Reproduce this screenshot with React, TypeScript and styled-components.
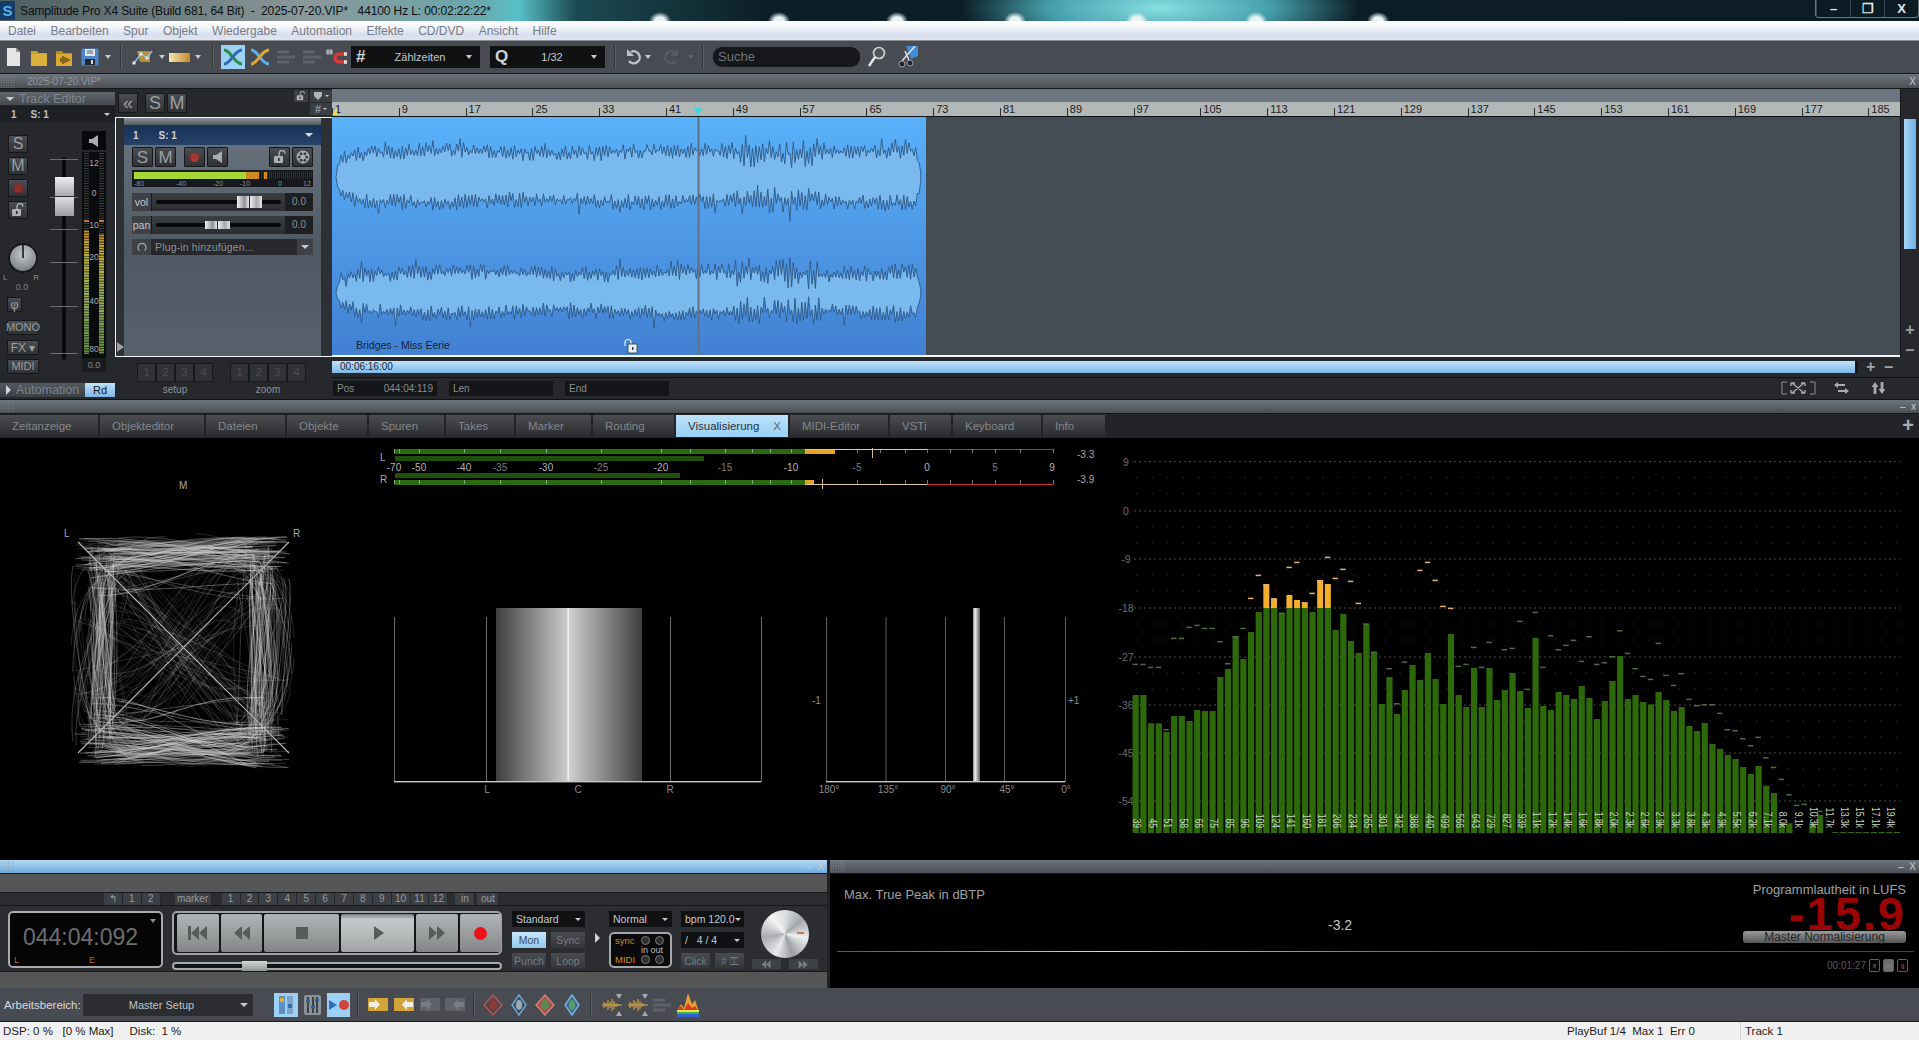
import React from "react";
import styled, { createGlobalStyle } from "styled-components";

const FONT = `"Liberation Sans", Arial, sans-serif`;

const GlobalStyle = createGlobalStyle`
  html, body {
    margin: 0;
    padding: 0;
    background: #000;
    overflow: hidden;
  }
  body, button {
    font-family: ${FONT};
  }
`;

// small seeded random, so the waves look the same on every run
function makeRng(seed: number) {
  let a = seed;
  return () => {
    a = (a + 0x6d2b79f5) | 0;
    let t = Math.imul(a ^ (a >>> 15), 1 | a);
    t = (t + Math.imul(t ^ (t >>> 7), 61 | t)) ^ t;
    return ((t ^ (t >>> 14)) >>> 0) / 4294967296;
  };
}

/* ---------- window chrome ---------- */

const blotches = [660, 779, 897, 1015, 1137, 1256, 1378]
  .map((x) => `radial-gradient(ellipse 11px 9px at ${x}px 21px, #e8f4f4 0, #e8f4f4 45%, transparent 100%)`)
  .join(",");

const Page = styled.div`
  width: 1919px;
  height: 1040px;
  display: flex;
  flex-direction: column;
  overflow: hidden;
  background: #2a2c2f;
`;

const TitleBar = styled.div`
  height: 21px;
  flex: none;
  display: flex;
  align-items: center;
  background: ${blotches}, radial-gradient(ellipse 200px 50px at 1160px 8px, #86dfe2 0, #469fac 55%, transparent 100%),
    linear-gradient(90deg, #4d5c60 0, #8a989a 16%, #6aa8ae 25%, #58c0c8 27%, #1c4a52 30%, #0c1e26 40%, #0b1c24 100%);
`;

const AppLogo = styled.div`
  width: 15px;
  height: 19px;
  background: #143c66;
  color: #58b2ee;
  font-size: 15px;
  font-weight: bold;
  text-align: center;
  line-height: 19px;
`;

const TitleText = styled.span`
  margin-left: 5px;
  font-size: 12px;
  letter-spacing: -0.12px;
  color: #0c1012;
  white-space: pre;
`;

const WindowButtons = styled.div`
  margin-left: auto;
  width: 104px;
  height: 18px;
  align-self: flex-start;
  display: flex;
  border: 1px solid #6a7880;
  border-top: none;
  border-radius: 0 0 4px 4px;
  box-sizing: border-box;
`;

const WindowButton = styled.div`
  flex: 1;
  display: flex;
  align-items: center;
  justify-content: center;
  border-left: 1px solid #39454c;
  color: #e8e8e8;
  font-size: 13px;
  font-weight: bold;
`;

const MenuBar = styled.div`
  height: 20px;
  flex: none;
  display: flex;
  align-items: center;
  padding-left: 8px;
  gap: 14.5px;
  border-bottom: 1px solid #8b8f94;
  box-sizing: border-box;
  background: linear-gradient(180deg, #ffffff 0, #f2f4fa 35%, #d9dfee 70%, #e0e4ef 100%);
`;

const MenuItem = styled.span`
  font-size: 12px;
  color: #777c86;
`;

const ToolBar = styled.div<{ $h?: number }>`
  height: ${(p) => p.$h ?? 33}px;
  flex: none;
  display: flex;
  align-items: center;
  background: #484c52;
  border-bottom: 1px solid #17181a;
  box-sizing: border-box;
`;

const ToolSlot = styled.div<{ $ml?: number; $w: number; $active?: boolean }>`
  margin-left: ${(p) => p.$ml ?? 0}px;
  width: ${(p) => p.$w}px;
  height: 24px;
  flex: none;
  display: flex;
  align-items: center;
  justify-content: center;
  background: ${(p) => (p.$active ? "#9cd0f4" : "transparent")};
`;

const Caret = styled.i<{ $ml?: number; $c?: string; $s?: number; $auto?: boolean }>`
  display: block;
  flex: none;
  margin-left: ${(p) => (p.$auto ? "auto" : `${p.$ml ?? 0}px`)};
  width: 0;
  height: 0;
  border-left: ${(p) => p.$s ?? 3.5}px solid transparent;
  border-right: ${(p) => p.$s ?? 3.5}px solid transparent;
  border-top: ${(p) => p.$s ?? 4}px solid ${(p) => p.$c ?? "#c8cacc"};
`;

const ToolSep = styled.i<{ $ml: number }>`
  display: block;
  flex: none;
  margin-left: ${(p) => p.$ml}px;
  width: 1px;
  height: 24px;
  background: #33363a;
  border-right: 1px solid #5b5f65;
`;

const SnapSelect = styled.div<{ $ml: number; $w: number }>`
  margin-left: ${(p) => p.$ml}px;
  width: ${(p) => p.$w}px;
  height: 22px;
  flex: none;
  display: flex;
  align-items: center;
  padding: 0 8px 0 5px;
  box-sizing: border-box;
  background: #101113;
  color: #c6c8ca;
  font-size: 11px;
`;

const SnapGlyph = styled.span`
  font-size: 17px;
  font-weight: bold;
  color: #cfd1d3;
  width: 18px;
`;

const SnapLabel = styled.span`
  flex: 1;
  text-align: center;
`;

const SearchBox = styled.div`
  margin-left: 9px;
  width: 147px;
  height: 20px;
  flex: none;
  border-radius: 9px;
  background: #15171a;
  color: #6f7478;
  font-size: 13px;
  line-height: 20px;
  padding-left: 5px;
  box-sizing: border-box;
`;

const Grip = styled.i`
  display: block;
  flex: none;
  width: 15px;
  height: 100%;
  background: radial-gradient(#8a8f94 0.7px, transparent 0.8px) 0 0 / 2.5px 2.5px;
`;

const PaneHeader = styled.div<{ $h: number; $light?: boolean }>`
  height: ${(p) => p.$h}px;
  flex: none;
  display: flex;
  align-items: center;
  background: ${(p) =>
    p.$light ? "linear-gradient(180deg, #b5dcf8 0, #6fa9da 100%)" : "linear-gradient(180deg, #6f757c 0, #4b5056 100%)"};
  border-bottom: 1px solid #141517;
  box-sizing: border-box;
  color: #c8cacd;
`;

const PaneTitle = styled.span`
  margin-left: 12px;
  font-size: 10px;
  color: #8f959b;
`;

const PaneControls = styled.span`
  margin-left: auto;
  padding-right: 3px;
  font-size: 10px;
  white-space: pre;
`;

/* ---------- editor: left strip ---------- */

const EditorArea = styled.div`
  height: 311px;
  flex: none;
  display: flex;
  background: #26282b;
  border-bottom: 1px solid #101113;
  box-sizing: border-box;
`;

const LeftStrip = styled.div`
  width: 115px;
  flex: none;
  display: flex;
  flex-direction: column;
  padding-top: 3px;
  box-sizing: border-box;
`;

const StripHead = styled.div`
  height: 13px;
  display: flex;
  align-items: center;
  gap: 5px;
  padding-left: 6px;
  background: linear-gradient(180deg, #62676d 0, #45494e 100%);
  color: #7d8791;
  font-size: 12.5px;
`;

const StripName = styled.div`
  height: 16px;
  margin-top: 1px;
  display: flex;
  align-items: center;
  padding: 0 5px 0 11px;
  gap: 14px;
  background: #1e2023;
  color: #bfc2c5;
  font-size: 10px;
  font-weight: bold;
`;

const StripBody = styled.div`
  height: 258px;
  display: flex;
`;

const ButtonCol = styled.div`
  width: 40px;
  flex: none;
  display: flex;
  flex-direction: column;
  align-items: flex-start;
  padding: 13px 0 0 8px;
  box-sizing: border-box;
`;

const KeyButton = styled.button<{ $w?: number; $h?: number; $fs?: number; $mt?: number; $ml?: number }>`
  width: ${(p) => p.$w ?? 20}px;
  height: ${(p) => p.$h ?? 18}px;
  margin: ${(p) => p.$mt ?? 0}px 0 0 ${(p) => p.$ml ?? 0}px;
  flex: none;
  padding: 0;
  display: flex;
  align-items: center;
  justify-content: center;
  border: 1px solid #16171a;
  border-radius: 1px;
  background: linear-gradient(180deg, #4a4d52 0, #2f3135 100%);
  color: #9a9ea2;
  font-size: ${(p) => p.$fs ?? 15}px;
  line-height: 1;
`;

const Knob = styled.div`
  width: 26px;
  height: 26px;
  margin: 24px 0 0 0;
  border-radius: 50%;
  border: 2px solid #17181a;
  background: radial-gradient(circle at 50% 35%, #c4c8cc 0, #8f949a 60%, #5d6166 100%);
  display: flex;
  justify-content: center;
`;

const KnobMark = styled.i`
  display: block;
  width: 2px;
  height: 13px;
  background: #33363a;
`;

const KnobLabels = styled.div`
  width: 36px;
  height: 9px;
  margin-left: -5px;
  display: flex;
  justify-content: space-between;
  color: #8d9195;
  font-size: 8px;
  line-height: 9px;
`;

const KnobValue = styled.div`
  width: 28px;
  height: 10px;
  text-align: center;
  color: #7a7e82;
  font-size: 9px;
  line-height: 10px;
`;

const FaderCol = styled.div`
  width: 42px;
  height: 258px;
  flex: none;
  position: relative;
`;

const FaderTrack = styled.i`
  position: absolute;
  left: 22px;
  top: 35px;
  width: 4px;
  height: 203px;
  background: #08090a;
  border-radius: 2px;
`;

const FaderTick = styled.i<{ $top: number }>`
  position: absolute;
  left: 10px;
  top: ${(p) => p.$top}px;
  width: 28px;
  height: 1px;
  background: #6c7075;
`;

const FaderCap = styled.div`
  position: absolute;
  left: 15px;
  top: 55px;
  width: 19px;
  height: 39px;
  background: linear-gradient(180deg, #eceeef 0, #a8acb0 48%, #2a2c2f 49%, #2a2c2f 51%, #dcdee0 52%, #9a9ea3 100%);
`;

const MeterCol = styled.div`
  width: 25px;
  flex: none;
  display: flex;
  flex-direction: column;
  padding-top: 9px;
  box-sizing: border-box;
`;

const SpeakerBox = styled.div`
  width: 24px;
  height: 19px;
  margin-bottom: 2px;
  display: flex;
  align-items: center;
  justify-content: center;
  background: #08090a;
`;

const MeterValue = styled.div`
  width: 24px;
  height: 14px;
  background: #1a1b1d;
  color: #8a8e92;
  font-size: 9px;
  text-align: center;
  line-height: 14px;
`;

const AutomationRow = styled.div`
  height: 14px;
  margin-top: 3px;
  display: flex;
`;

const AutomationLabel = styled.div`
  flex: 1;
  display: flex;
  align-items: center;
  gap: 5px;
  padding-left: 6px;
  background: linear-gradient(180deg, #55595f 0, #3b3e43 100%);
  color: #78838e;
  font-size: 12.5px;
`;

const AutomationMode = styled.div`
  width: 30px;
  background: linear-gradient(180deg, #bfe2fa 0, #7fb7e2 100%);
  color: #14181c;
  font-size: 11px;
  text-align: center;
  line-height: 14px;
`;

/* ---------- editor: track column ---------- */

const TrackColumn = styled.div`
  width: 217px;
  flex: none;
  display: flex;
  flex-direction: column;
`;

const TrackTop = styled.div`
  height: 28px;
  flex: none;
  display: flex;
  padding: 4px 0 0 3px;
  box-sizing: border-box;
`;

const TopRightTools = styled.div`
  margin-left: auto;
  display: flex;
  flex-direction: column;
  align-items: flex-end;
  margin-top: -3px;
  gap: 1px;
`;

const TinyRow = styled.div`
  display: flex;
  align-items: center;
  gap: 2px;
  height: 12px;
`;

const TinyTool = styled.div<{ $w: number }>`
  width: ${(p) => p.$w}px;
  height: 12px;
  display: flex;
  align-items: center;
  justify-content: center;
  gap: 2px;
  background: #3b3e42;
  color: #b2b5b8;
  font-size: 11px;
  line-height: 1;
`;

const TrackFrame = styled.div`
  height: 240px;
  flex: none;
  display: flex;
  border: 1px solid #f2f4f6;
  border-right: none;
  box-sizing: border-box;
`;

const FrameGutter = styled.div<{ $w: number }>`
  width: ${(p) => p.$w}px;
  flex: none;
  display: flex;
  align-items: flex-end;
  justify-content: center;
  padding-bottom: 4px;
  box-sizing: border-box;
  background: #2d3034;
`;

const GutterArrow = styled.i`
  display: block;
  width: 0;
  height: 0;
  border-top: 5px solid transparent;
  border-bottom: 5px solid transparent;
  border-left: 7px solid #9aa0a6;
`;

const TrackCard = styled.div`
  width: 197px;
  flex: none;
  display: flex;
  flex-direction: column;
  background: linear-gradient(180deg, #6b7681 0, #4e5963 55%, #56616c 100%);
`;

const CardTop = styled.div`
  height: 7px;
  background: linear-gradient(180deg, #8b9198 0, #565b61 100%);
`;

const CardHead = styled.div`
  height: 20px;
  display: flex;
  align-items: center;
  padding: 0 8px 0 9px;
  gap: 20px;
  background: linear-gradient(180deg, #173257 0, #27426a 100%);
  color: #cfd3d7;
  font-size: 10px;
  font-weight: bold;
  white-space: nowrap;
`;

const CardButtons = styled.div`
  display: flex;
  height: 20px;
  margin: 2px 0 0 8px;
`;

const CardMeter = styled.svg`
  display: block;
  width: 181px;
  height: 17px;
  margin: 3px 0 0 8px;
`;

const ParamRow = styled.div<{ $mt: number }>`
  height: 18px;
  margin: ${(p) => p.$mt}px 8px 0;
  display: flex;
  align-items: stretch;
  background: #26282b;
`;

const ParamLabel = styled.div`
  width: 19px;
  flex: none;
  background: #3e4145;
  color: #c2c5c8;
  font-size: 10.5px;
  text-align: center;
  line-height: 18px;
  border-right: 1px solid #17181a;
`;

const ParamSlider = styled.div`
  flex: 1;
  position: relative;
  background: linear-gradient(180deg, #3b3e42 0, #2c2e31 100%);
`;

const ParamTrack = styled.i`
  position: absolute;
  left: 4px;
  right: 4px;
  top: 7px;
  height: 4px;
  border-radius: 2px;
  background: #08090a;
`;

const ParamThumb = styled.i<{ $left: number; $h: number }>`
  position: absolute;
  left: ${(p) => p.$left}px;
  top: ${(p) => (18 - p.$h) / 2}px;
  width: 25px;
  height: ${(p) => p.$h}px;
  background: linear-gradient(90deg, #f2f3f4 0, #8f9398 30%, #e8e9ea 48%, #22242a 50%, #e8e9ea 54%, #a4a8ac 80%, #e6e7e8 100%);
`;

const ParamValue = styled.div`
  width: 28px;
  flex: none;
  background: #1d1f22;
  color: #8b8f93;
  font-size: 10px;
  text-align: center;
  line-height: 18px;
`;

const PluginRow = styled.div`
  height: 16px;
  margin: 5px 8px 0;
  display: flex;
  align-items: center;
  background: #26282b;
  color: #8d9195;
  font-size: 10.5px;
  letter-spacing: 0.15px;
`;

const PluginIcon = styled.div`
  width: 19px;
  height: 16px;
  display: flex;
  align-items: center;
  justify-content: center;
  background: #3e4145;
  margin-right: 4px;
`;

const PluginDrop = styled.div`
  margin-left: auto;
  width: 16px;
  height: 16px;
  display: flex;
  align-items: center;
  justify-content: center;
  background: #3e4145;
`;

const TrackFoot = styled.div`
  flex: 1;
  display: flex;
  gap: 17px;
  padding: 6px 0 0 22px;
  box-sizing: border-box;
`;

const PresetGroup = styled.div`
  display: flex;
  flex-direction: column;
  align-items: center;
  gap: 2px;
`;

const PresetKeys = styled.div`
  display: flex;
`;

const PresetKey = styled.div`
  width: 19px;
  height: 19px;
  box-sizing: border-box;
  border: 1px solid #17181a;
  background: #303235;
  color: #4b4e52;
  font-size: 11px;
  text-align: center;
  line-height: 17px;
`;

const PresetLabel = styled.span`
  color: #8f9397;
  font-size: 10px;
`;

/* ---------- editor: arrange ---------- */

const Arrange = styled.div`
  flex: 1;
  display: flex;
  flex-direction: column;
  min-width: 0;
`;

const ArrangeTop = styled.div`
  height: 268px;
  flex: none;
  display: flex;
`;

const ArrangeMain = styled.div`
  flex: 1;
  display: flex;
  flex-direction: column;
  min-width: 0;
`;

const RulerTop = styled.div`
  height: 13px;
  flex: none;
  background: #6c7480;
`;

const Ruler = styled.div`
  height: 15px;
  flex: none;
  display: flex;
  position: relative;
  overflow: hidden;
  background: #b2b7b8;
  border-bottom: 1px solid #101113;
  box-sizing: border-box;
`;

const RulerCell = styled.div`
  width: 66.8px;
  flex: none;
  box-sizing: border-box;
  padding-left: 3px;
  color: #1a1c1e;
  font-size: 11px;
  line-height: 14px;
  background: linear-gradient(#2a2c2f, #2a2c2f) 0 6px / 1px 8px no-repeat;
`;

const PlayMark = styled.i`
  position: absolute;
  left: 362px;
  top: 6px;
  width: 0;
  height: 0;
  border-left: 4px solid transparent;
  border-right: 4px solid transparent;
  border-top: 8px solid #3adbe0;
`;

const LoopMark = styled.i`
  position: absolute;
  left: 0;
  top: 6px;
  width: 0;
  height: 0;
  border-right: 5px solid #e8dc6a;
  border-top: 7px solid transparent;
`;

const Lane = styled.div`
  height: 238px;
  flex: none;
  display: flex;
  background: #444c56;
`;

const Clip = styled.svg`
  display: block;
  width: 594px;
  height: 238px;
  flex: none;
`;

const WhiteLine = styled.div`
  height: 2px;
  flex: none;
  background: #f4f6f8;
`;

const VScroll = styled.div`
  width: 19px;
  flex: none;
  display: flex;
  flex-direction: column;
  align-items: center;
  background: #26282b;
  padding-top: 30px;
  box-sizing: border-box;
  border-left: 1px solid #15161a;
`;

const VThumb = styled.div`
  width: 12px;
  height: 131px;
  background: linear-gradient(90deg, #a8d6f6 0, #6fb0e4 100%);
`;

const VStep = styled.div<{ $mt: number }>`
  margin-top: ${(p) => p.$mt}px;
  color: #9a9ea2;
  font-size: 16px;
  font-weight: bold;
  line-height: 14px;
`;

const ScrollRow = styled.div`
  height: 21px;
  flex: none;
  display: flex;
  align-items: center;
  border-bottom: 1px solid #101113;
  box-sizing: border-box;
`;

const HScroll = styled.div`
  width: 1526px;
  height: 12px;
  flex: none;
  padding-left: 8px;
  box-sizing: border-box;
  background: linear-gradient(180deg, #c0e2fa 0, #7fb9e8 100%);
  color: #1a2430;
  font-size: 10px;
  line-height: 12px;
  border-right: 3px solid #14161a;
`;

const ScrollStep = styled.div<{ $ml: number }>`
  margin-left: ${(p) => p.$ml}px;
  color: #a0a4a8;
  font-size: 16px;
  font-weight: bold;
`;

const InfoRow = styled.div`
  height: 20px;
  flex: none;
  display: flex;
  align-items: center;
  padding-left: 1px;
`;

const InfoBox = styled.div<{ $ml?: number }>`
  width: 104px;
  height: 15px;
  margin-left: ${(p) => p.$ml ?? 0}px;
  flex: none;
  display: flex;
  justify-content: space-between;
  padding: 0 4px;
  box-sizing: border-box;
  background: #141518;
  color: #898d91;
  font-size: 10px;
  line-height: 15px;
`;

const InfoTool = styled.div<{ $ml: number }>`
  margin-left: ${(p) => p.$ml}px;
  flex: none;
  display: flex;
`;

/* ---------- tabs ---------- */

const TabBar = styled.div`
  height: 24px;
  flex: none;
  display: flex;
  align-items: flex-end;
  gap: 2px;
  padding-bottom: 1px;
  box-sizing: border-box;
  background: #222427;
`;

const Tab = styled.div<{ $w: number; $active?: boolean }>`
  width: ${(p) => p.$w}px;
  height: 22px;
  flex: none;
  display: flex;
  align-items: center;
  padding-left: 12px;
  box-sizing: border-box;
  font-size: 11.5px;
  color: ${(p) => (p.$active ? "#26323c" : "#83878b")};
  background: ${(p) =>
    p.$active ? "linear-gradient(180deg, #bde2fb 0, #98cff5 100%)" : "linear-gradient(180deg, #4b4d51 0, #2b2c2f 100%)"};
`;

const TabClose = styled.span`
  margin-left: auto;
  padding-right: 7px;
  color: #5c6770;
`;

const TabAdd = styled.div`
  margin-left: auto;
  width: 22px;
  height: 22px;
  color: #a8acb0;
  font-size: 20px;
  font-weight: bold;
  text-align: center;
  line-height: 20px;
`;

/* ---------- visualisation ---------- */

const VizPanel = styled.div`
  height: 422px;
  flex: none;
  display: flex;
  background: #000;
`;

const VizChart = styled.svg<{ $w: number }>`
  display: block;
  width: ${(p) => p.$w}px;
  height: 422px;
  flex: none;
`;

const ChartText = styled.text<{ $fs?: number; $c?: string }>`
  font-family: ${FONT};
  font-size: ${(p) => p.$fs ?? 10}px;
  fill: ${(p) => p.$c ?? "#a8a8a8"};
`;

/* ---------- bottom docks ---------- */

const Docks = styled.div`
  height: 128px;
  flex: none;
  display: flex;
  gap: 3px;
  background: #202225;
`;

const TransportDock = styled.div`
  width: 827px;
  flex: none;
  display: flex;
  flex-direction: column;
`;

const DockBody = styled.div`
  flex: 1;
  background: #565656;
  padding-top: 18px;
  box-sizing: border-box;
`;

const Transport = styled.div`
  height: 80px;
  display: flex;
  flex-direction: column;
  background: #2b2d30;
  border-top: 1px solid #17181a;
  border-bottom: 1px solid #17181a;
  box-sizing: border-box;
`;

const MarkerRow = styled.div`
  height: 13px;
  flex: none;
  display: flex;
  padding-left: 104px;
  border-bottom: 1px solid #17181a;
  box-sizing: border-box;
`;

const MarkerKey = styled.div<{ $w?: number; $ml?: number }>`
  width: ${(p) => p.$w ?? 18.9}px;
  margin-left: ${(p) => p.$ml ?? 0}px;
  flex: none;
  background: #3c3f43;
  border-right: 1px solid #26282b;
  box-sizing: border-box;
  color: #979b9f;
  font-size: 10px;
  text-align: center;
  line-height: 12px;
`;

const TransportBody = styled.div`
  flex: 1;
  display: flex;
  padding: 5px 0 0 8px;
  box-sizing: border-box;
`;

const TimeDisplay = styled.div`
  width: 155px;
  height: 57px;
  flex: none;
  position: relative;
  display: flex;
  flex-direction: column;
  padding: 11px 0 0 13px;
  box-sizing: border-box;
  border: 2px solid #a7abae;
  border-radius: 5px;
  background: #050505;
  color: #6b6d6f;
  font-size: 23px;
  line-height: 26px;
`;

const TimeMarks = styled.div`
  display: flex;
  gap: 70px;
  margin: 5px 0 0 -9px;
  color: #b46a2c;
  font-size: 9px;
  line-height: 10px;
`;

const TimeCaret = styled.i`
  position: absolute;
  right: 5px;
  top: 6px;
  width: 0;
  height: 0;
  border-left: 3px solid transparent;
  border-right: 3px solid transparent;
  border-top: 4px solid #8a8e92;
`;

const TransportCol = styled.div`
  width: 330px;
  margin-left: 9px;
  flex: none;
  display: flex;
  flex-direction: column;
`;

const TransportKeys = styled.div`
  height: 44px;
  flex: none;
  display: flex;
  gap: 2px;
  padding: 1px 3px;
  box-sizing: border-box;
  border: 2px solid #9ea2a5;
  border-radius: 5px;
  background: #141517;
`;

const TransportKey = styled.div<{ $w: number; $lit?: boolean }>`
  width: ${(p) => p.$w}px;
  flex: none;
  display: flex;
  align-items: center;
  justify-content: center;
  border-radius: 2px;
  background: ${(p) =>
    p.$lit
      ? "linear-gradient(180deg, #7c8080 0, #c4c8c8 14%, #b6baba 55%, #a0a4a4 100%)"
      : "linear-gradient(180deg, #b0b4b4 0, #989c9c 55%, #828686 100%)"};
`;

const TransportSlider = styled.div`
  height: 8px;
  margin-top: 7px;
  position: relative;
  border: 2px solid #a4a8ab;
  border-radius: 4px;
  background: #121315;
  box-sizing: border-box;
`;

const SliderThumb = styled.i`
  position: absolute;
  left: 68px;
  top: -3px;
  width: 25px;
  height: 10px;
  background: linear-gradient(180deg, #d6d8d8 0, #8f9393 100%);
`;

const ModeCol = styled.div<{ $w: number; $ml: number }>`
  width: ${(p) => p.$w}px;
  margin-left: ${(p) => p.$ml}px;
  flex: none;
  display: flex;
  flex-direction: column;
`;

const ModeSelect = styled.div<{ $mt?: number }>`
  height: 16px;
  margin-top: ${(p) => p.$mt ?? 0}px;
  flex: none;
  display: flex;
  align-items: center;
  justify-content: space-between;
  padding: 0 4px;
  box-sizing: border-box;
  background: #101113;
  color: #c6c8ca;
  font-size: 10.5px;
  white-space: nowrap;
`;

const ModeGrid = styled.div`
  display: grid;
  grid-template-columns: 29px 29px;
  grid-auto-rows: 16px;
  justify-content: space-between;
  row-gap: 5px;
  margin-top: 5px;
`;

const WideModeGrid = styled(ModeGrid)`
  grid-template-columns: 34px 34px;
`;

const ModeKey = styled.div<{ $lit?: boolean }>`
  background: ${(p) => (p.$lit ? "linear-gradient(180deg, #c6e6fb 0, #93c9ef 100%)" : "linear-gradient(180deg, #484b4f 0, #33353a 100%)")};
  color: ${(p) => (p.$lit ? "#3b4a55" : "#777b7f")};
  font-size: 10.5px;
  text-align: center;
  line-height: 16px;
`;

const ModeArrowCol = styled.div`
  width: 24px;
  flex: none;
  display: flex;
  justify-content: center;
  padding-top: 22px;
  box-sizing: border-box;
`;

const ArrowRight = styled.i`
  display: block;
  width: 0;
  height: 0;
  border-top: 5px solid transparent;
  border-bottom: 5px solid transparent;
  border-left: 5px solid #d0d4d8;
`;

const SyncBox = styled.div`
  height: 36px;
  margin-top: 5px;
  flex: none;
  display: grid;
  grid-template-columns: 26px 14px 14px;
  grid-template-rows: 12px 7px 12px;
  align-items: center;
  align-content: center;
  padding: 0 0 0 4px;
  box-sizing: border-box;
  border: 2px solid #a4a8ab;
  border-radius: 5px;
  background: #0a0a0b;
  color: #d08a24;
  font-size: 9.5px;
`;

const SyncLed = styled.i`
  display: block;
  width: 9px;
  height: 9px;
  box-sizing: border-box;
  border-radius: 50%;
  border: 1px solid #77797c;
  background: #2c2e30;
`;

const InOutLabel = styled.span`
  grid-column: 2 / 4;
  color: #b8babd;
  font-size: 9px;
  line-height: 7px;
  white-space: nowrap;
`;

const JogCol = styled.div`
  width: 66px;
  margin-left: 8px;
  margin-top: -1px;
  flex: none;
  display: flex;
  flex-direction: column;
  align-items: center;
`;

const JogWheel = styled.div`
  width: 48px;
  height: 48px;
  flex: none;
  position: relative;
  border-radius: 50%;
  background: conic-gradient(#dcdfe0 0deg, #a3a7aa 50deg, #eceeef 100deg, #9b9fa2 160deg, #e8eaea 205deg, #a9adb0 260deg, #f1f2f3 320deg, #dcdfe0 360deg);
`;

const JogMark = styled.i`
  position: absolute;
  left: 36px;
  top: 22px;
  width: 7px;
  height: 2px;
  background: #c47a50;
`;

const JogKeys = styled.div`
  display: flex;
  justify-content: space-between;
  width: 100%;
  margin-top: 1px;
`;

const JogKey = styled.div`
  width: 29px;
  height: 10px;
  display: flex;
  align-items: center;
  justify-content: center;
  background: #3e4145;
`;

const LoudDock = styled.div`
  flex: 1;
  display: flex;
  flex-direction: column;
  min-width: 0;
`;

const LoudBody = styled.div`
  flex: 1;
  display: flex;
  flex-direction: column;
  background: #000;
  padding: 0 5px 0 7px;
  box-sizing: border-box;
  position: relative;
`;

const LoudTop = styled.div`
  height: 77px;
  flex: none;
  display: flex;
  border-bottom: 1px solid #3a3a3a;
  border-image: linear-gradient(90deg, #555 0, #d8d8d8 25%, #777 50%, #444 100%) 1;
`;

const PeakCol = styled.div`
  flex: 1;
  position: relative;
  padding: 13px 0 0 7px;
  color: #a0a0a0;
  font-size: 13px;
`;

const PeakValue = styled.span`
  position: absolute;
  left: 491px;
  top: 43px;
  color: #c8c8c8;
  font-size: 14px;
`;

const LufsCol = styled.div`
  width: 170px;
  flex: none;
  display: flex;
  flex-direction: column;
  align-items: flex-end;
  padding: 9px 8px 0 0;
  box-sizing: border-box;
`;

const LufsTitle = styled.span`
  color: #a0a0a0;
  font-size: 13px;
  line-height: 14px;
  white-space: nowrap;
`;

const LufsValue = styled.span`
  color: #9a0404;
  font-size: 47px;
  font-weight: bold;
  line-height: 36px;
  letter-spacing: 2px;
  margin-top: -1px;
  white-space: nowrap;
`;

const NormButton = styled.div`
  width: 163px;
  height: 12px;
  flex: none;
  margin-top: -1px;
  border-radius: 3px;
  background: linear-gradient(180deg, #9a9a9a 0, #565656 100%);
  color: #262626;
  font-size: 12px;
  text-align: center;
  line-height: 12px;
`;

const LoudBottom = styled.div`
  display: flex;
  justify-content: flex-end;
  align-items: center;
  gap: 3px;
  padding: 7px 6px 0 0;
  color: #5a5a5a;
  font-size: 10px;
`;

const SmallSquare = styled.i<{ $fill?: boolean }>`
  display: flex;
  align-items: center;
  justify-content: center;
  width: 11px;
  height: 13px;
  box-sizing: border-box;
  border: 1px solid #626262;
  border-radius: 2px;
  background: ${(p) => (p.$fill ? "#6e6e6e" : "transparent")};
  color: #7e7e7e;
  font-size: 8px;
  font-style: normal;
`;

/* ---------- bottom toolbar and status ---------- */

const WorkspaceLabel = styled.span`
  margin-left: 4px;
  color: #d8dadc;
  font-size: 11.5px;
  width: 79px;
  flex: none;
`;

const WorkspaceSelect = styled.div`
  width: 170px;
  height: 22px;
  flex: none;
  display: flex;
  align-items: center;
  padding: 0 5px 0 0;
  box-sizing: border-box;
  background: #2b2d30;
  color: #c0c3c6;
  font-size: 11px;
`;

const StatusBar = styled.div`
  flex: 1;
  display: flex;
  align-items: center;
  padding-left: 3px;
  background: #f0f0f0;
  color: #1c1c1c;
  font-size: 11.5px;
  white-space: pre;
`;

const StatusRight = styled.span`
  margin-left: auto;
  display: flex;
  height: 100%;
  align-items: center;
`;

const StatusCell = styled.span<{ $w: number; $line?: boolean }>`
  width: ${(p) => p.$w}px;
  height: 100%;
  display: flex;
  align-items: center;
  padding-left: 4px;
  box-sizing: border-box;
  border-left: 1px solid ${(p) => (p.$line ? "#d0d0d0" : "transparent")};
`;

/* ---------- icons ---------- */

const DocIcon = () => (
  <svg width="15" height="18" viewBox="0 0 15 18">
    <path d="M1 0h9l4 4v14H1z" fill="#e4e6e8" />
    <path d="M10 0l4 4h-4z" fill="#8d9195" />
  </svg>
);

const FolderIcon = ({ wave }: { wave?: boolean }) => (
  <svg width="18" height="17" viewBox="0 0 18 17">
    <path d="M1 2h6l1.500 2H17v13H1z" fill={wave ? "#b68a1e" : "#c9a02a"} />
    <rect x="1" y="5" width="16" height="12" fill={wave ? "#d8aa34" : "#d8b03a"} />
    {wave && <path d="M4 11v0M6 9v4M8 7v8M10 8v6M12 9v4M14 10v2" stroke="#54370c" strokeWidth="1.2" />}
  </svg>
);

const SaveIcon = () => (
  <svg width="18" height="18" viewBox="0 0 18 18">
    <rect x="0.5" y="0.5" width="17" height="17" rx="1" fill="#4d86c8" />
    <rect x="4" y="1" width="10" height="7" fill="#dfe5ea" />
    <path d="M6 3h6M6 5h6" stroke="#55606a" />
    <rect x="4" y="11" width="10" height="6" fill="#22262c" />
    <rect x="10" y="12" width="2" height="4" fill="#d8dde2" />
  </svg>
);

const NodesIcon = () => (
  <svg width="22" height="18" viewBox="0 0 22 18">
    <path d="M5 3h13v11H8z" fill="#c79a3a" opacity="0.85" />
    <path d="M2 15L9 6l6 4 5-7" fill="none" stroke="#8cc4ee" strokeWidth="1.4" />
    <rect x="0.5" y="13.5" width="3" height="3" fill="#dfe8ee" />
    <rect x="7.5" y="4.5" width="3" height="3" fill="#dfe8ee" />
    <rect x="13.5" y="8.5" width="3" height="3" fill="#dfe8ee" />
  </svg>
);

const GoldBar = ({ w = 21 }: { w?: number }) => (
  <svg width={w} height="9" viewBox="0 0 21 9" preserveAspectRatio="none">
    <defs>
      <linearGradient id="goldBar" x1="0" x2="1" y1="0" y2="0">
        <stop offset="0" stopColor="#f6e7b8" />
        <stop offset="1" stopColor="#c48a1e" />
      </linearGradient>
    </defs>
    <rect width="21" height="9" fill="url(#goldBar)" />
  </svg>
);

const CrossfadeIcon = ({ active }: { active?: boolean }) => (
  <svg width="20" height="18" viewBox="0 0 20 18">
    <path d="M1 2c7 0 10 14 18 14" fill="none" stroke={active ? "#2e8a3c" : "#5cb0ea"} strokeWidth="3" />
    <path d="M1 16C8 16 11 2 19 2" fill="none" stroke={active ? "#2c6bb0" : "#e0a63a"} strokeWidth="3" />
  </svg>
);

const ListIcon = () => (
  <svg width="18" height="14" viewBox="0 0 18 14">
    <path d="M0 2h12M0 7h18M0 12h12" stroke="#5f6369" strokeWidth="3" />
  </svg>
);

const MagnetIcon = () => (
  <svg width="24" height="18" viewBox="0 0 24 18">
    <path d="M3 1v6M6 1v6M1 3h7M1 5h7" stroke="#d8dadc" strokeWidth="0.9" />
    <path d="M22 6H14a4 4 0 0 0 0 8h8" fill="none" stroke="#d63a32" strokeWidth="3.6" />
    <path d="M19 6h3M19 14h3" stroke="#dfe2e4" strokeWidth="3.6" />
  </svg>
);

const UndoIcon = ({ faded, flip }: { faded?: boolean; flip?: boolean }) => (
  <svg width="16" height="18" viewBox="0 0 16 18">
    <g transform={flip ? "translate(16,0) scale(-1,1)" : undefined}>
      <path d="M5 4a6 6 0 1 1-2 9" fill="none" stroke={faded ? "#5a5e63" : "#c0c3c6"} strokeWidth="2.4" />
      <path d="M1 1v7h7z" fill={faded ? "#5a5e63" : "#c0c3c6"} />
    </g>
  </svg>
);

const LensIcon = () => (
  <svg width="19" height="22" viewBox="0 0 19 22">
    <circle cx="12" cy="7" r="5.5" fill="#50555a" stroke="#d4d6d8" strokeWidth="1.6" />
    <path d="M8 11L2 20" stroke="#e4e6e8" strokeWidth="2.4" />
  </svg>
);

const CutToolIcon = () => (
  <svg width="22" height="22" viewBox="0 0 22 22">
    <path d="M9 0h12v10L14 13z" fill="#3d8ed6" />
    <path d="M18 0L5 15M8 5l4 9" stroke="#d9dcdf" strokeWidth="1.6" />
    <circle cx="5" cy="18" r="3" fill="#22262a" stroke="#9aa0a6" />
    <circle cx="13" cy="17" r="3" fill="#22262a" stroke="#9aa0a6" />
  </svg>
);

const LockIcon = ({ c = "#aeb1b4", w = 14 }: { c?: string; w?: number }) => (
  <svg width={w} height={w} viewBox="0 0 14 14">
    <path d="M6 6V3.500a3 3 0 0 1 6 0" fill="none" stroke={c} strokeWidth="1.4" />
    <rect x="1" y="6" width="9" height="7" rx="1" fill={c} />
    <rect x="5" y="8" width="1.6" height="3" fill="#2a2c2f" />
  </svg>
);

const ShieldIcon = () => (
  <svg width="10" height="10" viewBox="0 0 10 10">
    <path d="M1 1h8v4L5 9 1 5z" fill="#b2b5b8" />
  </svg>
);

const SpeakerIcon = ({ c = "#a8acb0", w = 12 }: { c?: string; w?: number }) => (
  <svg width={w} height={w} viewBox="0 0 12 12">
    <path d="M1 4h3l6-4v12L4 8H1z" fill={c} />
  </svg>
);

const RecDot = ({ r = 4.5, c = "#8e2c2a" }: { r?: number; c?: string }) => (
  <svg width={r * 2} height={r * 2} viewBox="0 0 10 10">
    <circle cx="5" cy="5" r="5" fill={c} />
  </svg>
);

const ReelIcon = () => (
  <svg width="14" height="14" viewBox="0 0 14 14">
    <circle cx="7" cy="7" r="6.500" fill="#aeb2b6" />
    {[0, 60, 120, 180, 240, 300].map((a) => (
      <circle key={a} cx={7 + 3.8 * Math.cos((a * Math.PI) / 180)} cy={7 + 3.8 * Math.sin((a * Math.PI) / 180)} r="1.5" fill="#3a3d41" />
    ))}
  </svg>
);

const SkipGlyph = ({ kind, c = "#565b5c", h = 16 }: { kind: string; c?: string; h?: number }) => (
  <svg width={(22 * h) / 16} height={h} viewBox="0 0 22 16">
    {kind === "start" && <path d="M1 1h3v14H1zM12 1v14L4 8zM20 1v14l-8-7z" fill={c} />}
    {kind === "back" && <path d="M11 1v14L3 8zM19 1v14l-8-7z" fill={c} />}
    {kind === "stop" && <path d="M5 2h12v12H5z" fill={c} />}
    {kind === "play" && <path d="M7 1l10 7-10 7z" fill={c} />}
    {kind === "fwd" && <path d="M3 1v14l8-7zM11 1v14l8-7z" fill={c} />}
  </svg>
);

const MirrorWave = ({ c = "#d8a848" }: { c?: string }) => (
  <svg width="22" height="22" viewBox="0 0 22 22">
    <path d="M1 11h20M3 8v6M5 9v4M7 6v10M9 8v6M11 5v12M13 7v8M15 9v4M17 10v2" stroke={c} strokeWidth="1.1" />
    <path d="M15 0h6l-3 5zM15 22h6l-3-5z" fill="#a8acb0" />
  </svg>
);

const Diamond = ({ w, fill, edge, core }: { w: number; fill: string; edge: string; core: string }) => (
  <svg width={w} height="22" viewBox={`0 0 ${w} 22`}>
    <path d={`M${w / 2} 1L${w - 1} 11L${w / 2} 21L1 11z`} fill={fill} stroke={edge} strokeWidth="1.4" />
    <ellipse cx={w / 2} cy="11" rx={w / 5} ry="5" fill={core} />
  </svg>
);

const WorkspaceIcon = ({ kind }: { kind: "grid" | "mix" | "rec" }) => {
  if (kind === "grid")
    return (
      <svg width="18" height="20" viewBox="0 0 18 20">
        <rect x="2" y="1" width="6" height="18" fill="#5f8fc0" />
        <rect x="10" y="1" width="6" height="18" fill="#7fa4c8" />
        <rect x="3" y="3" width="4" height="4" fill="#e4b03a" />
        <rect x="11" y="9" width="4" height="4" fill="#2e6fb4" />
      </svg>
    );
  if (kind === "mix")
    return (
      <svg width="17" height="20" viewBox="0 0 17 20">
        <rect width="17" height="20" rx="2" fill="#8a9198" />
        <path d="M4 2v16M9 2v16M13 2v16" stroke="#1f2226" strokeWidth="1.4" />
        <path d="M2 6h4M7 12h4M11 5h4" stroke="#30608e" strokeWidth="2.4" />
      </svg>
    );
  return (
    <svg width="22" height="18" viewBox="0 0 22 18">
      <path d="M1 4l8 5-8 5z" fill="#2a72bc" />
      <circle cx="16" cy="9" r="5" fill="#d2453e" />
    </svg>
  );
};

const ShiftIcon = ({ flip, dim }: { flip?: boolean; dim?: boolean }) => (
  <svg width="20" height="13" viewBox="0 0 20 13">
    <rect width="20" height="13" fill={dim ? "#5f6368" : "#d3a43a"} />
    <path d={flip ? "M12 6.500L7 1v3H1v5h6v3z" : "M8 6.500L13 1v3h6v5h-6v3z"} fill={dim ? "#797d82" : "#f4efe2"} />
  </svg>
);

const RainbowIcon = () => (
  <svg width="22" height="24" viewBox="0 0 22 24">
    <path d="M0 19l4-8 3 4 4-15 4 11 3-4 4 12z" fill="#e8a030" />
    <path d="M0 19l2-4 2-2 3 4 4-7 4 5 3-2 4 6z" fill="#d83a2a" />
    <rect y="17" width="22" height="2" fill="#f0e040" />
    <rect y="19" width="22" height="2" fill="#3cb050" />
    <rect y="21" width="22" height="3" fill="#3060d0" />
  </svg>
);

/* ---------- data drawings ---------- */

function wavePath(seed: number, center: number, amp: number, dir: number, boost: number) {
  const rng = makeRng(seed);
  const pts: string[] = [];
  let flip = 1;
  for (let x = 4; x <= 590; x += 1.7) {
    // quick pinch at both ends of the clip
    const fade = Math.max(0, Math.min(1, (x - 4) / 3, (590 - x) / 6));
    const loud = x > 403 && x < 490;
    const swing = loud ? boost : 8;
    const spike = rng() > 0.92 ? 7 : 0;
    const drift = Math.sin(x / 37 + seed) * 1.5;
    const lead = x < 26 ? (26 - x) * 0.35 : 0;
    flip = -flip;
    const a = amp - lead + drift + flip * rng() * swing + (flip > 0 ? spike : 0);
    pts.push(`${x.toFixed(1)} ${(center + dir * Math.max(0, a) * Math.max(0.03, fade)).toFixed(1)}`);
  }
  return pts;
}

function channelPath(seed: number, center: number, up: number, down: number) {
  const top = wavePath(seed, center, up, -1, 15);
  const bottom = wavePath(seed + 7, center, down, 1, 15).reverse();
  return `M${top.join("L")}L${bottom.join("L")}Z`;
}

const WaveClip = () => {
  const channels = React.useMemo(() => [channelPath(11, 60, 25, 24), channelPath(23, 176, 20, 19)], []);
  return (
    <Clip viewBox="0 0 594 238">
      <defs>
        <linearGradient id="clipFill" x1="0" x2="0" y1="0" y2="1">
          <stop offset="0" stopColor="#5ab1fa" />
          <stop offset="1" stopColor="#4280d2" />
        </linearGradient>
      </defs>
      <rect width="594" height="238" fill="url(#clipFill)" />
      {channels.map((d) => (
        <path key={d.length} d={d} fill="#7ab9ee" stroke="#2c5886" strokeWidth="0.9" />
      ))}
      <rect x="365.5" width="2" height="238" fill="#5f7183" />
      <ChartText x="24" y="232" $fs={10.5} $c="#14243a">
        Bridges - Miss Eerie
      </ChartText>
      <g transform="translate(291,222)">
        <path d="M2 7V3.500a3 3 0 0 1 6 0V6" fill="none" stroke="#e8eef4" strokeWidth="1.2" />
        <rect x="5" y="5" width="9" height="9" rx="1" fill="#e8eef4" stroke="#2a3a4c" strokeWidth="0.8" />
        <rect x="9" y="8" width="1.4" height="3" fill="#2a3a4c" />
      </g>
    </Clip>
  );
};

const Goniometer = () => {
  const paths = React.useMemo(() => {
    const rng = makeRng(77);
    const r = (a: number, b: number) => a + rng() * (b - a);
    const out: { d: string; o: number; w: number }[] = [];
    // dense bands along the top and bottom edge
    for (let i = 0; i < 170; i++) {
      const top = i % 2 === 0;
      const wide = i % 5 === 0;
      const y0 = top ? r(538, wide ? 600 : 572) : r(wide ? 696 : 724, 764);
      const y1 = top ? r(536, wide ? 600 : 572) : r(wide ? 696 : 726, 768);
      out.push({
        d: `M${r(74, 120)} ${y0}C${r(120, 170)} ${y0 + r(-8, 8)} ${r(190, 240)} ${y1 + r(-8, 8)} ${r(245, 290)} ${y1}`,
        o: r(0.15, 0.55),
        w: r(0.6, 1.1),
      });
    }
    // bands along the sides
    for (let i = 0; i < 110; i++) {
      const left = i % 2 === 0;
      const wide = i % 5 === 0;
      const x0 = left ? r(wide ? 70 : 88, wide ? 130 : 116) : r(wide ? 236 : 248, wide ? 292 : 272);
      const x1 = left ? r(wide ? 70 : 88, wide ? 130 : 116) : r(wide ? 236 : 248, wide ? 292 : 272);
      out.push({
        d: `M${x0} ${r(545, 590)}C${x0 + r(-10, 12)} ${r(590, 630)} ${x1 + r(-12, 10)} ${r(660, 700)} ${x1} ${r(705, 758)}`,
        o: r(0.14, 0.5),
        w: r(0.6, 1),
      });
    }
    // long curves that cross the middle
    for (let i = 0; i < 110; i++) {
      const a = rng() > 0.5;
      const sx = r(74, 135);
      const ex = r(230, 290);
      const sy = a ? r(540, 630) : r(665, 760);
      const ey = a ? r(665, 760) : r(540, 630);
      out.push({
        d: `M${sx} ${sy}C${r(120, 180)} ${sy + r(-30, 50)} ${r(180, 250)} ${ey + r(-50, 30)} ${ex} ${ey}`,
        o: r(0.06, 0.28),
        w: 0.7,
      });
    }
    // rounded corners, the beam turning from one edge into the next
    for (let i = 0; i < 90; i++) {
      const cx = i % 2 === 0 ? r(76, 100) : r(265, 292);
      const cy = i % 4 < 2 ? r(535, 555) : r(745, 768);
      const hx = cx < 180 ? r(130, 220) : r(140, 235);
      const vy = r(600, 690);
      out.push({
        d: `M${hx} ${cy + r(-3, 14) * (cy < 640 ? 1 : -1)}Q${cx} ${cy} ${cx + r(-6, 6)} ${vy}`,
        o: r(0.12, 0.42),
        w: 0.7,
      });
    }
    return out;
  }, []);
  return (
    <VizChart $w={380} viewBox="0 438 380 422">
      {paths.map((p, i) => (
        <path key={i} d={p.d} fill="none" stroke="#d8d8d8" strokeOpacity={p.o} strokeWidth={p.w} />
      ))}
      <path d="M78 542L289 753M289 542L78 753" stroke="#b4b4b4" strokeWidth="1.2" />
      <ChartText x="64" y="537">L</ChartText>
      <ChartText x="293" y="537">R</ChartText>
      <ChartText x="179" y="489">M</ChartText>
    </VizChart>
  );
};

const greenTicks = [394, 399, 419, 464, 500, 546, 601, 661, 690, 725, 752, 770, 791];
const redTicks = [857, 880, 905, 927, 950, 972, 995, 1020, 1053];
const scaleLabels: [string, number][] = [
  ["-70", 394], ["-50", 419], ["-40", 464], ["-35", 500], ["-30", 546], ["-25", 601], ["-20", 661],
  ["-15", 725], ["-10", 791], ["-5", 857], ["0", 927], ["5", 995], ["9", 1052],
];

const LevelBar = ({ y, orange, mark }: { y: number; orange: number; mark: number }) => (
  <g>
    <rect x="394" y={y} width="411" height="5" fill="#2b6b10" />
    <rect x="805" y={y} width={orange - 805} height="5" fill="#e4a226" />
    <path d={`M805 ${y + (y < 460 ? 0.5 : 4.5)}H927`} stroke="#e2c8a0" />
    <path d={`M927 ${y + (y < 460 ? 0.5 : 4.5)}H1053`} stroke="#c83028" />
    <rect x={mark} y={y - 1} width="1" height="10" fill="#d8b890" />
    {[...greenTicks, ...redTicks].map((t) => (
      <rect key={t} x={t} y={y} width="0.8" height="4" fill="#ccd8c4" opacity="0.7" />
    ))}
  </g>
);

const widthLines = [394, 486, 670, 761];
const phaseLines = [826, 885.5, 945, 1004, 1065];
const widthLabels: [string, number][] = [["L", 487], ["C", 578], ["R", 670]];
const phaseLabels: [string, number][] = [["180°", 829], ["135°", 888], ["90°", 948], ["45°", 1007], ["0°", 1066]];

const CenterCharts = () => (
  <VizChart $w={730} viewBox="380 438 730 422">
    <defs>
      <linearGradient id="widthFill" x1="0" x2="1" y1="0" y2="0">
        <stop offset="0" stopColor="#3e3e3e" />
        <stop offset="0.5" stopColor="#cfcfcf" />
        <stop offset="1" stopColor="#3e3e3e" />
      </linearGradient>
      <linearGradient id="phaseFill" x1="0" x2="1" y1="0" y2="0">
        <stop offset="0" stopColor="#8a8a8a" />
        <stop offset="0.3" stopColor="#f0f0f0" />
        <stop offset="1" stopColor="#5a5a5a" />
      </linearGradient>
    </defs>
    <ChartText x="380" y="461">L</ChartText>
    <ChartText x="380" y="483">R</ChartText>
    <LevelBar y={449} orange={835} mark={872} />
    <rect x="395" y="456" width="309" height="5" fill="#1e4f0b" />
    <rect x="395" y="473" width="285" height="5" fill="#1e4f0b" />
    <LevelBar y={480} orange={814} mark={822} />
    {scaleLabels.map(([t, x], i) => (
      <ChartText key={t} x={x} y="471" textAnchor="middle" $c={i % 2 === 0 || i < 3 ? "#b4b4b4" : "#7e7e7e"}>
        {t}
      </ChartText>
    ))}
    <ChartText x="1077" y="458">-3.3</ChartText>
    <ChartText x="1077" y="483">-3.9</ChartText>

    <rect x="496" y="608" width="146" height="174" fill="url(#widthFill)" />
    {widthLines.map((x) => (
      <rect key={x} x={x} y="617" width="1" height="165" fill="#6a6a6a" />
    ))}
    <rect x="567.5" y="608" width="1.4" height="174" fill="#f4f4f4" />
    <rect x="394" y="781" width="367" height="1.4" fill="#c8c8c8" />
    {widthLabels.map(([t, x]) => (
      <ChartText key={t} x={x} y="793" textAnchor="middle" $c="#8c8c8c">{t}</ChartText>
    ))}

    {phaseLines.map((x) => (
      <rect key={x} x={x} y="617" width="1" height="165" fill="#5e5e5e" />
    ))}
    <rect x="973" y="608" width="7" height="174" fill="url(#phaseFill)" />
    <rect x="826" y="781" width="239" height="1.4" fill="#c8c8c8" />
    {phaseLabels.map(([t, x]) => (
      <ChartText key={t} x={x} y="793" textAnchor="middle" $c="#8c8c8c">{t}</ChartText>
    ))}
    <ChartText x="812" y="704" $c="#8c8c8c">-1</ChartText>
    <ChartText x="1068" y="704" $c="#8c8c8c">+1</ChartText>
  </VizChart>
);

// bar tops and peak marks, in px from the top of the page
const barTops = [
  765, 765, 850, 850, 876, 828, 828, 843, 810, 813, 813, 711, 687, 588, 657, 576, 516, 432, 475, 518, 465, 480, 487, 516,
  420, 432, 570, 522, 603, 639, 552, 635, 792, 711, 822, 750, 675, 720, 639, 717, 792, 582, 765, 801, 684, 801, 684, 780,
  750, 699, 753, 804, 594, 798, 810, 756, 765, 777, 738, 774, 837, 783, 723, 648, 777, 765, 786, 793, 756, 780, 813, 801,
  858, 873, 849, 912, 927, 945, 957, 981, 1002, 978, 1037, 1059, 1150, 1150, 0, 0, 1150, 1125, 0, 1176, 1176, 1176, 1176,
  1176, 1176, 1176, 1176, 1176,
].map((v) => (v === 0 ? 0 : 440 + v / 3));

const peakTops = [
  671, 671, 680, 680, 867, 593, 593, 560, 554, 563, 563, 603, 669, 588, 563, 473, 404, 432, 475, 518, 380, 365, 487, 458,
  420, 350, 413, 386, 422, 488, 550, 635, 0, 684, 789, 664, 0, 389, 365, 419, 497, 503, 677, 671, 620, 680, 605, 0, 627,
  623, 542, 746, 515, 680, 585, 627, 614, 599, 662, 588, 671, 666, 648, 570, 638, 684, 707, 716, 608, 704, 734, 699, 776,
  795, 792, 792, 818, 867, 870, 894, 915, 890, 951, 980, 1016, 1062, 1094, 1091, 0, 1112,
].map((v) => (v === 0 ? 0 : 440 + v / 3));

const freqLabels = [
  "39", "45", "51", "58", "66", "75", "85", "96", "109", "124", "141", "160", "181", "206", "234", "265", "301", "342",
  "388", "440", "499", "566", "643", "729", "827", "939", "1.1k", "1.2k", "1.4k", "1.6k", "1.8k", "2.0k", "2.3k", "2.6k",
  "2.9k", "3.3k", "3.8k", "4.3k", "4.9k", "5.5k", "6.2k", "7.1k", "8.0k", "9.1k", "10.3k", "11.7k", "13.3k", "15.1k",
  "17.1k", "19.4k",
];

const dbRows: [string, number][] = [
  ["9", 461.7], ["0", 511], ["-9", 559], ["-18", 608], ["-27", 657], ["-36", 705], ["-45", 753], ["-54", 801],
];

const BAR_PITCH = 7.69;

const Spectrum = () => (
  <VizChart $w={809} viewBox="1110 438 809 422">
    {dbRows.map(([t, y], i) => (
      <g key={t}>
        <path d={`M1134 ${y}H1900`} stroke="#4c4c4c" strokeDasharray="2 3" />
        <ChartText x="1126" y={y + 4} textAnchor="middle" $c="#6c6c6c" $fs={10.5}>{t}</ChartText>
        {i < 7 && (
          <>
            <path d={`M1136 ${y + 16}H1900`} stroke="#2e2e2e" strokeDasharray="1.5 14" />
            <path d={`M1136 ${y + 32}H1900`} stroke="#2e2e2e" strokeDasharray="1.5 14" />
          </>
        )}
      </g>
    ))}
    {barTops.map((top, i) => {
      if (!top) return null;
      const x = 1132.6 + BAR_PITCH * i;
      const green = Math.max(top, 608);
      return (
        <g key={i}>
          {top < 608 && <rect x={x} y={top} width="6" height={608 - top} fill="#f2ae2c" />}
          <rect x={x} y={green} width="6.2" height={833 - green} fill="#2d690b" />
        </g>
      );
    })}
    {peakTops.map((top, i) =>
      top ? (
        <rect
          key={i}
          x={1132.6 + BAR_PITCH * i}
          y={top}
          width="5.4"
          height="1.5"
          fill={top < 608 ? "#e8b070" : "#4e6e40"}
        />
      ) : null
    )}
    {freqLabels.map((t, i) => (
      <ChartText
        key={t}
        transform={`translate(${1133.4 + BAR_PITCH * 2 * i},828) rotate(90) scale(0.82,1)`}
        textAnchor="end"
        $fs={10.5}
        $c="#c8d6c0"
      >
        {t}
      </ChartText>
    ))}
  </VizChart>
);

const menuItems = ["Datei", "Bearbeiten", "Spur", "Objekt", "Wiedergabe", "Automation", "Effekte", "CD/DVD", "Ansicht", "Hilfe"];
const rulerMarks = Array.from({ length: 24 }, (_, i) => 1 + i * 8);
const tabs: [string, number][] = [
  ["Zeitanzeige", 98], ["Objekteditor", 104], ["Dateien", 79], ["Objekte", 80], ["Spuren", 75], ["Takes", 68], ["Marker", 75],
  ["Routing", 81], ["Visualisierung", 112], ["MIDI-Editor", 98], ["VSTi", 61], ["Keyboard", 88], ["Info", 62],
];
const markerNumbers = Array.from({ length: 12 }, (_, i) => String(i + 1));

function App() {
  return (
    <Page>
      <GlobalStyle />
      <TitleBar>
        <AppLogo>S</AppLogo>
        <TitleText>{"Samplitude Pro X4 Suite (Build 681, 64 Bit)  -  2025-07-20.VIP*   44100 Hz L: 00:02:22:22*"}</TitleText>
        <WindowButtons>
          <WindowButton>–</WindowButton>
          <WindowButton>❐</WindowButton>
          <WindowButton>X</WindowButton>
        </WindowButtons>
      </TitleBar>

      <MenuBar>
        {menuItems.map((m) => (
          <MenuItem key={m}>{m}</MenuItem>
        ))}
      </MenuBar>

      <ToolBar>
        <ToolSlot $ml={6} $w={15}><DocIcon /></ToolSlot>
        <ToolSlot $ml={9} $w={18}><FolderIcon /></ToolSlot>
        <ToolSlot $ml={7} $w={18}><FolderIcon wave /></ToolSlot>
        <ToolSlot $ml={8} $w={18}><SaveIcon /></ToolSlot>
        <Caret $ml={6} />
        <ToolSep $ml={9} />
        <ToolSlot $ml={10} $w={22}><NodesIcon /></ToolSlot>
        <Caret $ml={5} />
        <ToolSlot $ml={4} $w={21}><GoldBar /></ToolSlot>
        <Caret $ml={5} />
        <ToolSep $ml={11} />
        <ToolSlot $ml={7} $w={24} $active><CrossfadeIcon active /></ToolSlot>
        <ToolSlot $ml={5} $w={20}><CrossfadeIcon /></ToolSlot>
        <ToolSlot $ml={6} $w={19}><ListIcon /></ToolSlot>
        <ToolSlot $ml={8} $w={18}><ListIcon /></ToolSlot>
        <ToolSlot $ml={4} $w={24}><MagnetIcon /></ToolSlot>
        <SnapSelect $ml={2} $w={129}>
          <SnapGlyph>#</SnapGlyph>
          <SnapLabel>Zählzeiten</SnapLabel>
          <Caret />
        </SnapSelect>
        <SnapSelect $ml={10} $w={115}>
          <SnapGlyph>Q</SnapGlyph>
          <SnapLabel>1/32</SnapLabel>
          <Caret />
        </SnapSelect>
        <ToolSep $ml={9} />
        <ToolSlot $ml={10} $w={16}><UndoIcon /></ToolSlot>
        <Caret $ml={3} />
        <ToolSlot $ml={12} $w={16}><UndoIcon faded flip /></ToolSlot>
        <Caret $ml={9} $c="#5f6368" />
        <ToolSep $ml={8} />
        <SearchBox>Suche</SearchBox>
        <ToolSlot $ml={6} $w={21}><LensIcon /></ToolSlot>
        <ToolSlot $ml={10} $w={22}><CutToolIcon /></ToolSlot>
      </ToolBar>

      <PaneHeader $h={15}>
        <Grip />
        <PaneTitle>2025-07-20.VIP*</PaneTitle>
        <PaneControls>X</PaneControls>
      </PaneHeader>

      <EditorArea>
        <LeftStrip>
          <StripHead>
            <Caret $s={4} />
            Track Editor
          </StripHead>
          <StripName>
            <span>1</span>
            <span>S: 1</span>
            <Caret $auto $s={3} />
          </StripName>
          <StripBody>
            <ButtonCol>
              <KeyButton $fs={16}>S</KeyButton>
              <KeyButton $fs={16} $mt={4}>M</KeyButton>
              <KeyButton $mt={4}><RecDot /></KeyButton>
              <KeyButton $mt={4}><LockIcon /></KeyButton>
              <Knob><KnobMark /></Knob>
              <KnobLabels><span>L</span><span>R</span></KnobLabels>
              <KnobValue>0.0</KnobValue>
              <KeyButton $w={15} $h={15} $fs={13} $mt={5} $ml={-1}>φ</KeyButton>
              <KeyButton $w={32} $h={15} $fs={11} $mt={8} $ml={-1}>MONO</KeyButton>
              <KeyButton $w={32} $h={15} $fs={12} $mt={5} $ml={-1}>FX&nbsp;▾</KeyButton>
              <KeyButton $w={32} $h={15} $fs={11} $mt={4} $ml={-1}>MIDI</KeyButton>
            </ButtonCol>
            <FaderCol>
              <FaderTrack />
              {[37, 75, 107, 140, 184, 231].map((t) => (
                <FaderTick key={t} $top={t} />
              ))}
              <FaderCap />
            </FaderCol>
            <MeterCol>
              <SpeakerBox><SpeakerIcon /></SpeakerBox>
              <svg width="24" height="206" viewBox="0 0 24 206">
                <defs>
                  <linearGradient id="chanMeter" x1="0" x2="0" y1="0" y2="1">
                    <stop offset="0" stopColor="#c08a2c" />
                    <stop offset="0.25" stopColor="#b8b248" />
                    <stop offset="0.6" stopColor="#8eaa60" />
                    <stop offset="1" stopColor="#5f8c42" />
                  </linearGradient>
                </defs>
                <rect width="24" height="206" fill="#0a0b0c" />
                <path d="M4.500 1V202M19.500 1V202" stroke="#3b3f40" strokeWidth="5" strokeDasharray="1 1.5" />
                <rect x="2" y="78" width="5" height="124" fill="url(#chanMeter)" />
                <rect x="17" y="82" width="5" height="120" fill="url(#chanMeter)" />
                <path d="M4.500 78V202M19.500 82V202" stroke="#0a0b0c" strokeWidth="5" strokeDasharray="0.6 2" />
                <rect x="2" y="68" width="5" height="2" fill="#c47a2a" />
                <rect x="17" y="68" width="5" height="2" fill="#c47a2a" />
                {[["12", 14], ["0", 44], ["10", 76], ["20", 108], ["40", 152], ["80", 200]].map(([t, y]) => (
                  <ChartText key={t} x="12" y={y} textAnchor="middle" $fs={8.5} $c="#a8acb0">{t}</ChartText>
                ))}
              </svg>
              <MeterValue>0.0</MeterValue>
            </MeterCol>
          </StripBody>
          <AutomationRow>
            <AutomationLabel>
              <ArrowRight />
              Automation
            </AutomationLabel>
            <AutomationMode>Rd</AutomationMode>
          </AutomationRow>
        </LeftStrip>

        <TrackColumn>
          <TrackTop>
            <KeyButton $h={20} $fs={18}>«</KeyButton>
            <KeyButton $h={20} $fs={18} $ml={7}>S</KeyButton>
            <KeyButton $h={20} $fs={18} $ml={2}>M</KeyButton>
            <TopRightTools>
              <TinyRow>
                <TinyTool $w={14}><LockIcon w={10} /></TinyTool>
                <TinyTool $w={22}><ShieldIcon /><Caret $s={2.5} /></TinyTool>
              </TinyRow>
              <TinyRow>
                <TinyTool $w={22}>#<Caret $s={2.5} /></TinyTool>
              </TinyRow>
            </TopRightTools>
          </TrackTop>
          <TrackFrame>
            <FrameGutter $w={8}><GutterArrow /></FrameGutter>
            <TrackCard>
              <CardTop />
              <CardHead>
                <span>1</span>
                <span>S: 1</span>
                <Caret $auto $s={4} $c="#d8dce0" />
              </CardHead>
              <CardButtons>
                <KeyButton $w={21} $h={20} $fs={17}>S</KeyButton>
                <KeyButton $w={21} $h={20} $fs={17} $ml={2}>M</KeyButton>
                <KeyButton $w={21} $h={20} $ml={8}><RecDot c="#a8352e" /></KeyButton>
                <KeyButton $w={21} $h={20} $ml={2}><SpeakerIcon /></KeyButton>
                <KeyButton $w={21} $h={20} $ml={41}><LockIcon /></KeyButton>
                <KeyButton $w={21} $h={20} $ml={2}><ReelIcon /></KeyButton>
              </CardButtons>
              <CardMeter viewBox="0 0 181 17">
                <rect width="181" height="17" fill="#16181d" />
                <path d="M1 5H180" stroke="#2e3134" strokeWidth="7" strokeDasharray="1 1" />
                <rect x="2" y="2" width="124" height="7" fill="#a8d838" />
                <rect x="114" y="2" width="13" height="7" fill="#d08a24" />
                <rect x="132" y="2" width="3" height="7" fill="#d08a24" />
                {[["-80", 7], ["-40", 49], ["-20", 86], ["-10", 113], ["0", 148], ["12", 175]].map(([t, x]) => (
                  <ChartText key={t} x={x} y="16" textAnchor="middle" $fs={7} $c="#8e9296">{t}</ChartText>
                ))}
              </CardMeter>
              <ParamRow $mt={6}>
                <ParamLabel>vol</ParamLabel>
                <ParamSlider>
                  <ParamTrack />
                  <ParamThumb $left={85} $h={12} />
                </ParamSlider>
                <ParamValue>0.0</ParamValue>
              </ParamRow>
              <ParamRow $mt={5}>
                <ParamLabel>pan</ParamLabel>
                <ParamSlider>
                  <ParamTrack />
                  <ParamThumb $left={53} $h={8} />
                </ParamSlider>
                <ParamValue>0.0</ParamValue>
              </ParamRow>
              <PluginRow>
                <PluginIcon>
                  <svg width="10" height="10" viewBox="0 0 10 10">
                    <path d="M2.500 8.500a4 4 0 1 1 5 0" fill="none" stroke="#a8acb0" strokeWidth="1.2" />
                  </svg>
                </PluginIcon>
                Plug-in hinzufügen...
                <PluginDrop><Caret $s={4} /></PluginDrop>
              </PluginRow>
            </TrackCard>
            <FrameGutter $w={11} />
          </TrackFrame>
          <TrackFoot>
            <PresetGroup>
              <PresetKeys>
                {[1, 2, 3, 4].map((n) => <PresetKey key={n}>{n}</PresetKey>)}
              </PresetKeys>
              <PresetLabel>setup</PresetLabel>
            </PresetGroup>
            <PresetGroup>
              <PresetKeys>
                {[1, 2, 3, 4].map((n) => <PresetKey key={n}>{n}</PresetKey>)}
              </PresetKeys>
              <PresetLabel>zoom</PresetLabel>
            </PresetGroup>
          </TrackFoot>
        </TrackColumn>

        <Arrange>
          <ArrangeTop>
            <ArrangeMain>
              <RulerTop />
              <Ruler>
                {rulerMarks.map((m) => (
                  <RulerCell key={m}>{m}</RulerCell>
                ))}
                <LoopMark />
                <PlayMark />
              </Ruler>
              <Lane>
                <WaveClip />
              </Lane>
              <WhiteLine />
            </ArrangeMain>
            <VScroll>
              <VThumb />
              <VStep $mt={74}>+</VStep>
              <VStep $mt={6}>–</VStep>
            </VScroll>
          </ArrangeTop>
          <ScrollRow>
            <HScroll>00:06:16:00</HScroll>
            <ScrollStep $ml={8}>+</ScrollStep>
            <ScrollStep $ml={9}>–</ScrollStep>
          </ScrollRow>
          <InfoRow>
            <InfoBox><span>Pos</span><span>044:04:119</span></InfoBox>
            <InfoBox $ml={12}><span>Len</span></InfoBox>
            <InfoBox $ml={12}><span>End</span></InfoBox>
            <InfoTool $ml={1112}>
              <svg width="35" height="14" viewBox="0 0 35 14">
                <path d="M6 1H1v12h5M29 1h5v12h-5" fill="none" stroke="#8f9397" />
                <path d="M11 2l12 10M23 2L11 12M10 2h4M10 2v3M24 2h-4M24 2v3M10 12h4M10 12V9M24 12h-4M24 12V9" stroke="#a8acb0" strokeWidth="1.4" />
              </svg>
            </InfoTool>
            <InfoTool $ml={17}>
              <svg width="17" height="14" viewBox="0 0 17 14">
                <path d="M1 4l4-3v2h7v2H5v2zM16 10l-4 3v-2H5V9h7V7z" fill="#a8acb0" />
              </svg>
            </InfoTool>
            <InfoTool $ml={21}>
              <svg width="15" height="14" viewBox="0 0 15 14">
                <path d="M4 1l3.400 5H5.400v7H2.600V6H.6zM11 13l3.400-5h-2V1H9.600v7h-2z" fill="#a8acb0" />
              </svg>
            </InfoTool>
          </InfoRow>
        </Arrange>
      </EditorArea>

      <PaneHeader $h={14}>
        <Grip />
        <PaneControls>{"–  x"}</PaneControls>
      </PaneHeader>

      <TabBar>
        {tabs.map(([name, w]) => (
          <Tab key={name} $w={w} $active={name === "Visualisierung"}>
            {name}
            {name === "Visualisierung" && <TabClose>X</TabClose>}
          </Tab>
        ))}
        <TabAdd>+</TabAdd>
      </TabBar>

      <VizPanel>
        <Goniometer />
        <CenterCharts />
        <Spectrum />
      </VizPanel>

      <Docks>
        <TransportDock>
          <PaneHeader $h={14} $light>
            <Grip />
            <PaneControls>{"–  X"}</PaneControls>
          </PaneHeader>
          <DockBody>
            <Transport>
              <MarkerRow>
                <MarkerKey>↰</MarkerKey>
                <MarkerKey>1</MarkerKey>
                <MarkerKey>2</MarkerKey>
                <MarkerKey $w={37} $ml={14}>marker</MarkerKey>
                {markerNumbers.map((n, i) => (
                  <MarkerKey key={n} $ml={i === 0 ? 10 : 0}>{n}</MarkerKey>
                ))}
                <MarkerKey $w={20} $ml={7}>in</MarkerKey>
                <MarkerKey $w={22} $ml={2}>out</MarkerKey>
              </MarkerRow>
              <TransportBody>
                <TimeDisplay>
                  044:04:092
                  <TimeMarks><span>L</span><span>E</span></TimeMarks>
                  <TimeCaret />
                </TimeDisplay>
                <TransportCol>
                  <TransportKeys>
                    <TransportKey $w={42}><SkipGlyph kind="start" /></TransportKey>
                    <TransportKey $w={41}><SkipGlyph kind="back" /></TransportKey>
                    <TransportKey $w={75}><SkipGlyph kind="stop" /></TransportKey>
                    <TransportKey $w={73} $lit><SkipGlyph kind="play" /></TransportKey>
                    <TransportKey $w={42}><SkipGlyph kind="fwd" /></TransportKey>
                    <TransportKey $w={41}><RecDot r={6.5} c="#f0101a" /></TransportKey>
                  </TransportKeys>
                  <TransportSlider><SliderThumb /></TransportSlider>
                </TransportCol>
                <ModeCol $w={73} $ml={10}>
                  <ModeSelect>Standard<Caret $s={3.5} /></ModeSelect>
                  <WideModeGrid>
                    <ModeKey $lit>Mon</ModeKey>
                    <ModeKey>Sync</ModeKey>
                    <ModeKey>Punch</ModeKey>
                    <ModeKey>Loop</ModeKey>
                  </WideModeGrid>
                </ModeCol>
                <ModeArrowCol><ArrowRight /></ModeArrowCol>
                <ModeCol $w={63} $ml={0}>
                  <ModeSelect>Normal<Caret $s={3.5} /></ModeSelect>
                  <SyncBox>
                    <span>sync</span>
                    <SyncLed />
                    <SyncLed />
                    <span />
                    <InOutLabel>in out</InOutLabel>
                    <span>MIDI</span>
                    <SyncLed />
                    <SyncLed />
                  </SyncBox>
                </ModeCol>
                <ModeCol $w={63} $ml={9}>
                  <ModeSelect>bpm 120.0<Caret $s={3} /></ModeSelect>
                  <ModeSelect $mt={5}>/&nbsp;&nbsp;&nbsp;4 / 4<Caret $s={3} /></ModeSelect>
                  <ModeGrid>
                    <ModeKey>Click</ModeKey>
                    <ModeKey># ⚿</ModeKey>
                  </ModeGrid>
                </ModeCol>
                <JogCol>
                  <JogWheel><JogMark /></JogWheel>
                  <JogKeys>
                    <JogKey><SkipGlyph kind="back" c="#797d82" h={9} /></JogKey>
                    <JogKey><SkipGlyph kind="fwd" c="#797d82" h={9} /></JogKey>
                  </JogKeys>
                </JogCol>
              </TransportBody>
            </Transport>
          </DockBody>
        </TransportDock>

        <LoudDock>
          <PaneHeader $h={14}>
            <Grip />
            <PaneControls>{"–  X"}</PaneControls>
          </PaneHeader>
          <LoudBody>
            <LoudTop>
              <PeakCol>
                Max. True Peak in dBTP
                <PeakValue>-3.2</PeakValue>
              </PeakCol>
              <LufsCol>
                <LufsTitle>Programmlautheit in LUFS</LufsTitle>
                <LufsValue>-15.9</LufsValue>
                <NormButton>Master Normalisierung</NormButton>
              </LufsCol>
            </LoudTop>
            <LoudBottom>
              00:01:27
              <SmallSquare>x</SmallSquare>
              <SmallSquare $fill>▸</SmallSquare>
              <SmallSquare>॥</SmallSquare>
            </LoudBottom>
          </LoudBody>
        </LoudDock>
      </Docks>

      <ToolBar $h={34}>
        <WorkspaceLabel>Arbeitsbereich:</WorkspaceLabel>
        <WorkspaceSelect>
          <SnapLabel>Master Setup</SnapLabel>
          <Caret $s={4.5} />
        </WorkspaceSelect>
        <ToolSlot $ml={21} $w={24} $active><WorkspaceIcon kind="grid" /></ToolSlot>
        <ToolSlot $ml={5} $w={18}><WorkspaceIcon kind="mix" /></ToolSlot>
        <ToolSlot $ml={6} $w={23} $active><WorkspaceIcon kind="rec" /></ToolSlot>
        <ToolSep $ml={7} />
        <ToolSlot $ml={9} $w={20}><ShiftIcon flip /></ToolSlot>
        <ToolSlot $ml={6} $w={20}><ShiftIcon /></ToolSlot>
        <ToolSlot $ml={6} $w={20}><ShiftIcon flip dim /></ToolSlot>
        <ToolSlot $ml={5} $w={20}><ShiftIcon dim /></ToolSlot>
        <ToolSep $ml={8} />
        <ToolSlot $ml={8} $w={20}><Diamond w={20} fill="#4c4a4e" edge="#b85450" core="#8e3a38" /></ToolSlot>
        <ToolSlot $ml={8} $w={16}><Diamond w={16} fill="#3a4a5a" edge="#6ea8d8" core="#9aa8b4" /></ToolSlot>
        <ToolSlot $ml={8} $w={20}><Diamond w={20} fill="#a8504a" edge="#d0807a" core="#5a8a58" /></ToolSlot>
        <ToolSlot $ml={9} $w={16}><Diamond w={16} fill="#3a6a90" edge="#7ab4dc" core="#5a9a70" /></ToolSlot>
        <ToolSep $ml={10} />
        <ToolSlot $ml={9} $w={22}><MirrorWave /></ToolSlot>
        <ToolSlot $ml={4} $w={22}><MirrorWave /></ToolSlot>
        <ToolSlot $ml={3} $w={20}><ListIcon /></ToolSlot>
        <ToolSlot $ml={5} $w={22}><RainbowIcon /></ToolSlot>
      </ToolBar>

      <StatusBar>
        {"DSP: 0 %   [0 % Max]     Disk:  1 %"}
        <StatusRight>
          <StatusCell $w={178}>{"PlayBuf 1/4  Max 1  Err 0"}</StatusCell>
          <StatusCell $w={179} $line>Track 1</StatusCell>
        </StatusRight>
      </StatusBar>
    </Page>
  );
}

export default App;
